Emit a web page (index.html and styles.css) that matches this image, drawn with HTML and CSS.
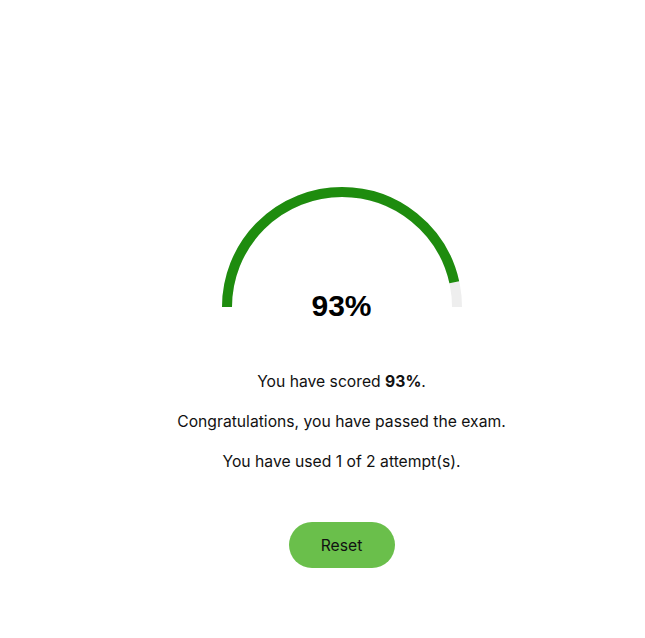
FILE: index.html
```html
<!DOCTYPE html>
<html lang="en">
<head>
<meta charset="utf-8">
<title>Exam result</title>
<link rel="stylesheet" href="styles.css">
</head>
<body>
<main class="result">
  <div class="gauge">
    <svg class="gauge-svg" width="240" height="120" viewBox="0 0 240 120" aria-hidden="true">
      <path d="M5 120 A115 115 0 0 1 235 120" fill="none" stroke="#eeeeee" stroke-width="10"/>
      <path d="M5 120 A115 115 0 0 1 235 120" fill="none" stroke="#1e8c0e" stroke-width="10" stroke-dasharray="336 400"/>
    </svg>
    <div class="gauge-value">93%</div>
  </div>
  <p class="line">You have scored <strong>93%</strong>.</p>
  <p class="line">Congratulations, you have passed the exam.</p>
  <p class="line">You have used 1 of 2 attempt(s).</p>
  <button class="reset" type="button">Reset</button>
</main>
</body>
</html>
```
FILE: styles.css
```css
html, body {
  margin: 0;
  padding: 0;
  background: #ffffff;
}
body {
  font-family: Inter, "Noto Sans", sans-serif;
  color: #111111;
}
.result {
  display: flex;
  flex-direction: column;
  align-items: center;
  padding: 187px 0 0 38px;
}
.gauge {
  position: relative;
  width: 240px;
  height: 120px;
}
.gauge-svg {
  display: block;
}
.gauge-value {
  position: absolute;
  left: 0;
  right: 0;
  top: 99px;
  text-align: center;
  font-family: "Liberation Sans", Arial, sans-serif;
  font-size: 30px;
  font-weight: 700;
  line-height: 40px;
  color: #000000;
}
.line {
  margin: 0;
  font-size: 15.7px;
  line-height: 24px;
}
.line:first-of-type {
  margin-top: 63px;
}
.line + .line {
  margin-top: 16px;
}
.reset {
  margin-top: 48px;
  width: 106px;
  height: 46px;
  border: none;
  border-radius: 23px;
  background: #6abf4b;
  color: #111111;
  font-family: Inter, "Noto Sans", sans-serif;
  font-size: 15.7px;
}
```
